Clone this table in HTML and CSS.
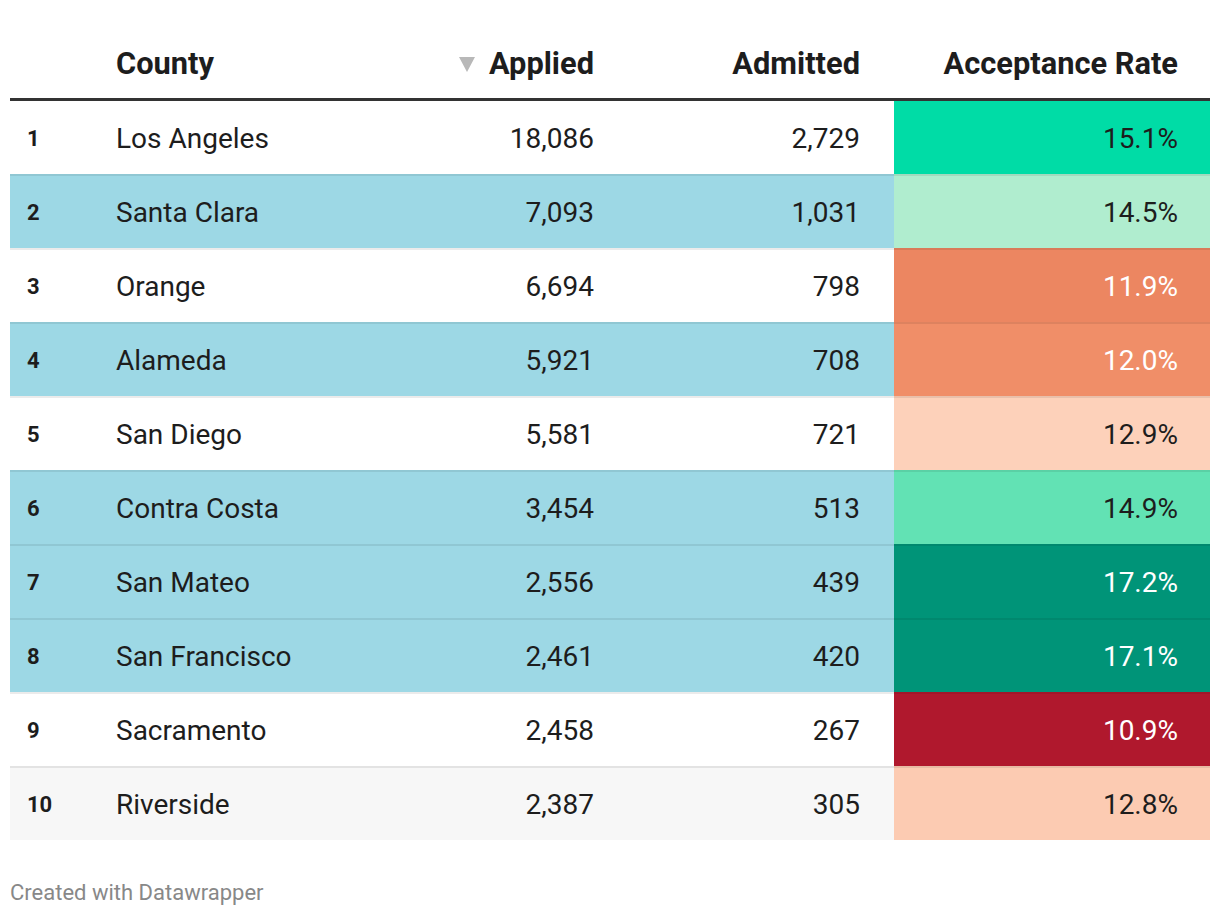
FILE: index.html
```html
<!DOCTYPE html>
<html lang="en">
<head>
<meta charset="utf-8">
<title>Acceptance by County</title>
<link rel="stylesheet" href="styles.css">
</head>
<body>
<div class="chart">
  <table class="dw-table">
    <colgroup>
      <col class="c-rank"><col class="c-county"><col class="c-applied"><col class="c-admitted"><col class="c-rate">
    </colgroup>
    <thead>
      <tr>
        <th class="rank"></th>
        <th class="left">County</th>
        <th class="num"><svg class="sort" width="16" height="15" viewBox="0 0 16 15"><path d="M0 0H16L8 15Z" fill="#b8b8b8"/></svg>Applied</th>
        <th class="num adm">Admitted</th>
        <th class="num rate">Acceptance Rate</th>
      </tr>
    </thead>
    <tbody>
      <tr><td class="rank">1</td><td class="left">Los Angeles</td><td class="num">18,086</td><td class="num adm">2,729</td><td class="num rate r151">15.1%</td></tr>
      <tr class="hl"><td class="rank">2</td><td class="left">Santa Clara</td><td class="num">7,093</td><td class="num adm">1,031</td><td class="num rate r145">14.5%</td></tr>
      <tr><td class="rank">3</td><td class="left">Orange</td><td class="num">6,694</td><td class="num adm">798</td><td class="num rate r119">11.9%</td></tr>
      <tr class="hl"><td class="rank">4</td><td class="left">Alameda</td><td class="num">5,921</td><td class="num adm">708</td><td class="num rate r120">12.0%</td></tr>
      <tr><td class="rank">5</td><td class="left">San Diego</td><td class="num">5,581</td><td class="num adm">721</td><td class="num rate r129">12.9%</td></tr>
      <tr class="hl"><td class="rank">6</td><td class="left">Contra Costa</td><td class="num">3,454</td><td class="num adm">513</td><td class="num rate r149">14.9%</td></tr>
      <tr class="hl"><td class="rank">7</td><td class="left">San Mateo</td><td class="num">2,556</td><td class="num adm">439</td><td class="num rate r172">17.2%</td></tr>
      <tr class="hl"><td class="rank">8</td><td class="left">San Francisco</td><td class="num">2,461</td><td class="num adm">420</td><td class="num rate r171">17.1%</td></tr>
      <tr><td class="rank">9</td><td class="left">Sacramento</td><td class="num">2,458</td><td class="num adm">267</td><td class="num rate r109">10.9%</td></tr>
      <tr class="gray"><td class="rank">10</td><td class="left">Riverside</td><td class="num">2,387</td><td class="num adm">305</td><td class="num rate r128">12.8%</td></tr>
    </tbody>
  </table>
  <div class="footer">Created with Datawrapper</div>
</div>
</body>
</html>
```

FILE: styles.css
```css
html, body {
  margin: 0;
  padding: 0;
  background: #ffffff;
}

body {
  font-family: Roboto, "Liberation Sans", Arial, sans-serif;
  color: #1d1d1d;
}

.chart {
  padding: 0 10px;
}

.dw-table {
  width: 1200px;
  border-collapse: separate;
  border-spacing: 0;
  table-layout: fixed;
}

.c-rank { width: 90px; }
.c-county { width: 320px; }
.c-applied { width: 190px; }
.c-admitted { width: 284px; }
.c-rate { width: 316px; }

th {
  height: 101px;
  box-sizing: border-box;
  padding: 0 16px 18px 16px;
  font-size: 30.8px;
  font-weight: 700;
  vertical-align: bottom;
  border-bottom: 3px solid #333333;
  line-height: 1;
  white-space: nowrap;
}

td {
  height: 74px;
  box-sizing: border-box;
  padding: 2px 16px 0 16px;
  font-size: 28px;
  line-height: 1;
  vertical-align: middle;
  border-top: 2px solid rgba(0, 0, 0, 0.08);
  white-space: nowrap;
}

tbody tr:first-child td {
  border-top: none;
  height: 73px;
}

.left { text-align: left; }
.num { text-align: right; }
.adm { padding-right: 34px; }
.rate { padding-right: 32px; }

td.rank {
  font-size: 22px;
  font-weight: 700;
  padding-left: 17px;
}

.sort {
  margin-right: 14px;
  vertical-align: 2px;
}

tr.hl { background: #9dd8e5; }
tr.gray { background: #f7f7f7; }

.r151 { background: #00dca6; }
.r145 { background: #b0edcf; }
.r119 { background: #ec8661; color: #ffffff; }
.r120 { background: #f08e68; color: #ffffff; }
.r129 { background: #fdd1ba; }
.r149 { background: #62e2b4; }
.r172 { background: #009478; color: #ffffff; }
.r171 { background: #009478; color: #ffffff; }
.r109 { background: #b0182d; color: #ffffff; }
.r128 { background: #fccbb2; }

.footer {
  margin-top: 40px;
  font-size: 22px;
  color: #888888;
}
```
